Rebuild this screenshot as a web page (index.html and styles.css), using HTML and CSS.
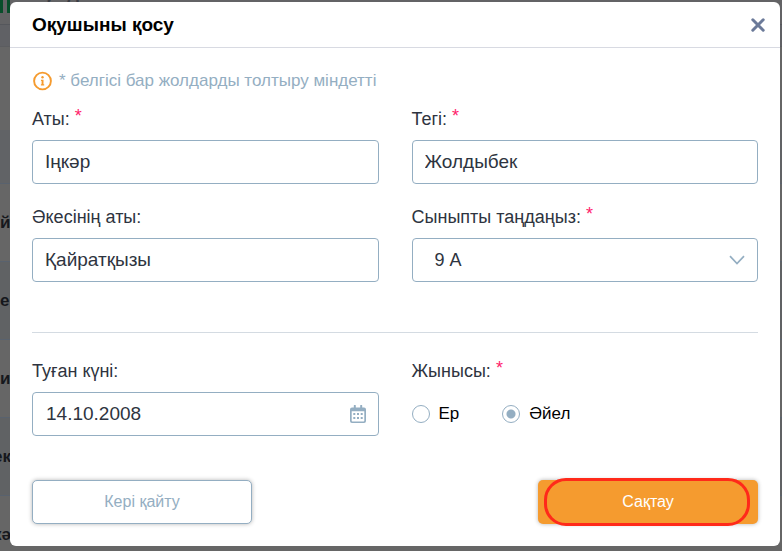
FILE: index.html
```
<!DOCTYPE html>
<html lang="kk">
<head>
    <meta charset="utf-8">
    <title>Оқушыны қосу</title>
    <link rel="stylesheet" href="styles.css">
</head>
<body>
    <!-- page under the dialog -->
    <div class="page" aria-hidden="true">
        <div class="topbar">
            <span class="logo"></span>
            <span class="logo"></span>
            <span class="site-name">У Д</span>
        </div>
        <div class="subbar"></div>
        <div class="toolbar"></div>
        <div class="row row-head"></div>
        <div class="row"><span class="name">йн</span></div>
        <div class="row row-dark"><span class="name">е</span></div>
        <div class="row"><span class="name">ир</span></div>
        <div class="row row-dark"><span class="name name-end">ек</span></div>
        <div class="row"><span class="name name-end">кә</span></div>
    </div>

    <div class="overlay">
        <form class="modal" role="dialog" aria-labelledby="modal-title">
            <div class="modal-header">
                <h1 id="modal-title">Оқушыны қосу</h1>
                <button type="button" class="close" aria-label="Жабу">
                    <svg width="16" height="16" viewBox="0 0 16 16"><path d="M2.800 2.800l10.400 10.400M13.200 2.800L2.800 13.200" fill="none" stroke="#6b7a99" stroke-width="3" stroke-linecap="round"/></svg>
                </button>
            </div>

            <div class="modal-body">
                <p class="notice">
                    <svg width="20" height="20" viewBox="0 0 20 20"><circle cx="10.500" cy="10" r="8.400" fill="none" stroke="#f59b2f" stroke-width="1.900"/><circle cx="10.500" cy="6.300" r="1.200" fill="#f59b2f"/><path d="M9 8.700h2.500v4.500h.7v1.200H8.900v-1.200h.7V9.900H9z" fill="#f59b2f"/></svg>
                    <span>* белгісі бар жолдарды толтыру міндетті</span>
                </p>

                <div class="grid">
                    <div class="field">
                        <label for="first-name">Аты: <span class="required">*</span></label>
                        <input type="text" id="first-name" class="control" value="Іңкәр" required>
                    </div>
                    <div class="field">
                        <label for="last-name">Тегі: <span class="required">*</span></label>
                        <input type="text" id="last-name" class="control" value="Жолдыбек" required>
                    </div>
                    <div class="field">
                        <label for="middle-name">Әкесінің аты:</label>
                        <input type="text" id="middle-name" class="control" value="Қайратқызы">
                    </div>
                    <div class="field">
                        <label for="class">Сыныпты таңдаңыз: <span class="required">*</span></label>
                        <div class="control-wrap">
                            <select id="class" class="control" required>
                                <option>9 А</option>
                            </select>
                            <svg class="control-icon" width="16" height="16" viewBox="0 0 16 16"><path d="M1 4.200l7 7.300 7-7.300" fill="none" stroke="#94aec2" stroke-width="1.700"/></svg>
                        </div>
                    </div>
                </div>

                <hr class="divider">

                <div class="grid">
                    <div class="field">
                        <label for="birthday">Туған күні:</label>
                        <div class="control-wrap">
                            <input type="text" id="birthday" class="control control-date" value="14.10.2008">
                            <svg class="control-icon" width="16" height="18" viewBox="0 0 16 18"><path d="M2 2.500h12a2 2 0 0 1 2 2V16a2 2 0 0 1-2 2H2a2 2 0 0 1-2-2V4.500a2 2 0 0 1 2-2zM1.700 6.200v9.500q0 .7.7.7h11.200q.7 0 .7-.7V6.200z" fill="#94aec2" fill-rule="evenodd"/><path d="M4.800.8v3M11.200.8v3" stroke="#94aec2" stroke-width="2" stroke-linecap="round"/><path d="M3.300 8h2v2h-2zM7 8h2v2H7zM10.700 8h2v2h-2zM3.300 12h2v2h-2zM7 12h2v2H7zM10.700 12h2v2h-2z" fill="#94aec2"/></svg>
                        </div>
                    </div>
                    <fieldset class="field">
                        <legend>Жынысы: <span class="required">*</span></legend>
                        <div class="radios">
                            <label class="radio"><input type="radio" name="gender"> Ер</label>
                            <label class="radio"><input type="radio" name="gender" checked> Әйел</label>
                        </div>
                    </fieldset>
                </div>
            </div>

            <div class="modal-footer">
                <button type="button" class="btn btn-back">Кері қайту</button>
                <button type="submit" class="btn btn-save">Сақтау</button>
            </div>
        </form>
    </div>
</body>
</html>
```
FILE: styles.css
```
* {
    box-sizing: border-box;
}

body {
    margin: 0;
    font-family: "Liberation Sans", Helvetica, Arial, sans-serif;
    font-size: 18px;
    line-height: 22px;
    color: #2e3440;
    background-color: #666;
}

.page {
    position: fixed;
    inset: 0;
    overflow: hidden;
    background-color: #666;
}

.topbar {
    display: flex;
    gap: 4px;
    height: 24px;
    background-color: #636365;
}

.logo {
    width: 3px;
    height: 13px;
    background-color: #084d2a;
}

.site-name {
    margin: -12px 0 0 26px;
    font-size: 26px;
    line-height: 20px;
    color: #3a3d44;
}

.subbar {
    height: 23px;
    background-color: #606165;
    border-top: 1px solid #55575c;
    border-bottom: 1px solid #5c5d60;
}

.toolbar {
    height: 83px;
}

.row {
    display: flex;
    align-items: center;
    height: 78px;
    border-bottom: 1px solid #59626e;
}

.row-head {
    height: 54px;
    background-color: #616366;
}

.row-dark {
    background-color: #606264;
}

.name {
    display: flex;
    width: 11px;
    font-size: 17px;
    font-weight: bold;
    color: #16181d;
}

.name-end {
    justify-content: flex-end;
}

.overlay {
    position: relative;
    padding: 2px 2px 5px 10px;
}

.modal {
    background-color: #fff;
    border-radius: 6px;
}

.modal-header {
    display: flex;
    justify-content: space-between;
    align-items: center;
    height: 46px;
    padding: 0 14px 0 22px;
    border-bottom: 1px solid #d8dae2;
}

.modal-header h1 {
    margin: 0;
    font-size: 19px;
    font-weight: bold;
    color: #000;
}

.close {
    display: flex;
    padding: 0;
    border: none;
    background: none;
    cursor: pointer;
}

.modal-body {
    padding: 22px 22px 0;
}

.notice {
    display: flex;
    align-items: center;
    gap: 7px;
    margin: 0 0 16px;
    font-size: 17px;
    color: #94aec2;
}

.grid {
    display: grid;
    grid-template-columns: 1fr 1fr;
    gap: 22px 33px;
}

.field {
    display: flex;
    flex-direction: column;
    gap: 10px;
    min-width: 0;
    margin: 0;
    padding: 0;
    border: none;
}

legend {
    padding: 0;
    margin-bottom: 10px;
}

.required {
    vertical-align: 3px;
    line-height: 0;
    color: #ff1c6b;
}

.control {
    width: 100%;
    height: 44px;
    padding: 0 12px;
    border: 1px solid #94aec2;
    border-radius: 4px;
    background-color: #fff;
    font-family: inherit;
    font-size: 19px;
    color: #2e3440;
}

select.control {
    appearance: none;
    padding: 0 22px;
    font-size: 18px;
}

.control-date {
    padding: 0 13px;
}

.control-wrap {
    display: grid;
    align-items: center;
}

.control-wrap > * {
    grid-area: 1 / 1;
}

.control-icon {
    justify-self: end;
    margin-right: 13px;
    pointer-events: none;
}

.divider {
    height: 1px;
    margin: 50px 0 27px;
    border: none;
    background-color: #d4dbe2;
}

.radios {
    display: flex;
    align-items: center;
    gap: 43px;
    height: 44px;
}

.radio {
    display: flex;
    align-items: center;
    gap: 9px;
    font-size: 17px;
    color: #000;
}

.radio input {
    appearance: none;
    width: 18px;
    height: 18px;
    margin: 0;
    border: 1px solid #94aec2;
    border-radius: 50%;
}

.radio input:checked {
    background: radial-gradient(circle, #94aec2 4px, #fff 5px);
}

.modal-footer {
    display: flex;
    justify-content: space-between;
    padding: 44px 22px 22px;
}

.btn {
    position: relative;
    width: 220px;
    height: 44px;
    border-radius: 5px;
    font-family: inherit;
    font-size: 16px;
    box-shadow: 0 0 4px rgba(0, 0, 0, 0.3);
    cursor: pointer;
}

.btn-back {
    border: 1px solid #94aec2;
    background-color: #fff;
    color: #94aec2;
}

.btn-save {
    border: none;
    background-color: #f59b2f;
    color: #fff;
}

/* red outline around the save button */
.btn-save::after {
    content: "";
    position: absolute;
    inset: -2px 8px -2px 6px;
    border: 3px solid #ff2a1a;
    border-radius: 22px;
}
```
